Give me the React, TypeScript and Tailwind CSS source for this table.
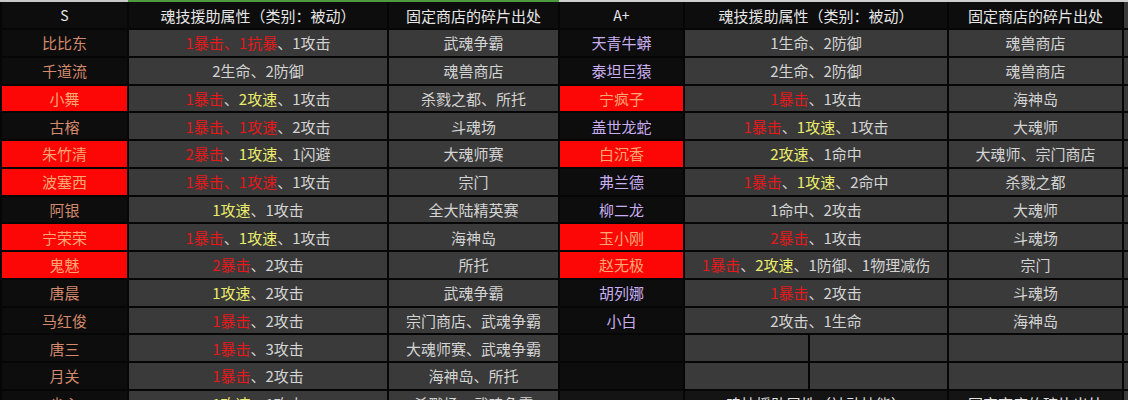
import React from "react";

type Seg = [string, "r" | "y" | "g"];

const colorClass: Record<string, string> = {
  r: "text-[#e3191b]",
  y: "text-[#ecec6c]",
  g: "text-[#d4d4d4]",
};

type Row = {
  name: string;
  red: boolean;
  attrs: Seg[];
  shop: string;
};

const leftRows: Row[] = [
  { name: "比比东", red: false, attrs: [["1暴击、1抗暴", "r"], ["、1攻击", "g"]], shop: "武魂争霸" },
  { name: "千道流", red: false, attrs: [["2生命、2防御", "g"]], shop: "魂兽商店" },
  { name: "小舞", red: true, attrs: [["1暴击", "r"], ["、", "g"], ["2攻速", "y"], ["、1攻击", "g"]], shop: "杀戮之都、所托" },
  { name: "古榕", red: false, attrs: [["1暴击、1攻速", "r"], ["、2攻击", "g"]], shop: "斗魂场" },
  { name: "朱竹清", red: true, attrs: [["2暴击", "r"], ["、", "g"], ["1攻速", "y"], ["、1闪避", "g"]], shop: "大魂师赛" },
  { name: "波塞西", red: true, attrs: [["1暴击、1攻速", "r"], ["、1攻击", "g"]], shop: "宗门" },
  { name: "阿银", red: false, attrs: [["1攻速", "y"], ["、1攻击", "g"]], shop: "全大陆精英赛" },
  { name: "宁荣荣", red: true, attrs: [["1暴击", "r"], ["、", "g"], ["1攻速", "y"], ["、1攻击", "g"]], shop: "海神岛" },
  { name: "鬼魅", red: true, attrs: [["2暴击", "r"], ["、2攻击", "g"]], shop: "所托" },
  { name: "唐晨", red: false, attrs: [["1攻速", "y"], ["、2攻击", "g"]], shop: "武魂争霸" },
  { name: "马红俊", red: false, attrs: [["1暴击", "r"], ["、2攻击", "g"]], shop: "宗门商店、武魂争霸" },
  { name: "唐三", red: false, attrs: [["1暴击", "r"], ["、3攻击", "g"]], shop: "大魂师赛、武魂争霸" },
  { name: "月关", red: false, attrs: [["1暴击", "r"], ["、2攻击", "g"]], shop: "海神岛、所托" },
  { name: "尘心", red: false, attrs: [["1攻速", "y"], ["、1攻击", "g"]], shop: "杀戮场、武魂争霸" },
];

const rightRows: (Row | null)[] = [
  { name: "天青牛蟒", red: false, attrs: [["1生命、2防御", "g"]], shop: "魂兽商店" },
  { name: "泰坦巨猿", red: false, attrs: [["2生命、2防御", "g"]], shop: "魂兽商店" },
  { name: "宁疯子", red: true, attrs: [["1暴击", "r"], ["、1攻击", "g"]], shop: "海神岛" },
  { name: "盖世龙蛇", red: false, attrs: [["1暴击", "r"], ["、", "g"], ["1攻速", "y"], ["、1攻击", "g"]], shop: "大魂师" },
  { name: "白沉香", red: true, attrs: [["2攻速", "y"], ["、1命中", "g"]], shop: "大魂师、宗门商店" },
  { name: "弗兰德", red: false, attrs: [["1暴击", "r"], ["、", "g"], ["1攻速", "y"], ["、2命中", "g"]], shop: "杀戮之都" },
  { name: "柳二龙", red: false, attrs: [["1命中、2攻击", "g"]], shop: "大魂师" },
  { name: "玉小刚", red: true, attrs: [["2暴击", "r"], ["、1攻击", "g"]], shop: "斗魂场" },
  { name: "赵无极", red: true, attrs: [["1暴击", "r"], ["、", "g"], ["2攻速", "y"], ["、1防御、1物理减伤", "g"]], shop: "宗门" },
  { name: "胡列娜", red: false, attrs: [["1暴击", "r"], ["、2攻击", "g"]], shop: "斗魂场" },
  { name: "小白", red: false, attrs: [["2攻击、1生命", "g"]], shop: "海神岛" },
  null,
  null,
];

const font = { fontFamily: '"Noto Sans CJK SC", "Noto Sans", sans-serif' };

function Attr({ segs }: { segs: Seg[] }) {
  return (
    <span className="whitespace-nowrap">
      {segs.map((s, i) => (
        <span key={i} className={colorClass[s[1]]}>
          {s[0]}
        </span>
      ))}
    </span>
  );
}

function NameCell({ row, side }: { row: Row | null; side: "L" | "R" }) {
  if (!row) return <div className="bg-[#0d0d0d]" />;
  const textColor = row.red
    ? "text-[#ffa673]"
    : side === "L"
    ? "text-[#d48a6c]"
    : "text-[#c9aef0]";
  return (
    <div
      className={`flex items-center justify-center ${
        row.red ? "bg-[#fd0606]" : "bg-[#0d0d0d]"
      } ${textColor}`}
    >
      {row.name}
    </div>
  );
}

function GrayCell({ children }: { children?: React.ReactNode }) {
  return (
    <div className="flex items-center justify-center bg-[#3a3a3a] text-[#d4d4d4]">
      {children}
    </div>
  );
}

const gridCols =
  "grid grid-cols-[125px_258px_169px_123px_262px_173px_4px] gap-x-[2px] pl-[2px]";

export default function App() {
  return (
    <div
      className="w-[1128px] h-[400px] overflow-hidden bg-[#060606] text-[15px] leading-none"
      style={font}
    >
      {/* top edge line */}
      <div className="flex h-[2px]">
        <div className="w-[128px] bg-[#c9c9c9]" />
        <div className="w-[431px] bg-[#4e9a3e]" />
        <div className="flex-1 bg-[#cfcfcf]" />
      </div>
      {/* header */}
      <div className={`${gridCols} h-[26px]`}>
        <div className="flex items-center justify-center bg-[#0d0d0d] text-[#e6e6e6] text-[14px]">S</div>
        <div className="flex items-center justify-center bg-[#0d0d0d] text-[#e6e6e6]">魂技援助属性（类别：被动）</div>
        <div className="flex items-center justify-center bg-[#0d0d0d] text-[#e6e6e6]">固定商店的碎片出处</div>
        <div className="flex items-center justify-center bg-[#0d0d0d] text-[#e6e6e6] text-[14px]">A+</div>
        <div className="flex items-center justify-center bg-[#0d0d0d] text-[#e6e6e6]">魂技援助属性（类别：被动）</div>
        <div className="flex items-center justify-center bg-[#0d0d0d] text-[#e6e6e6]">固定商店的碎片出处</div>
        <div className="bg-[#3a3a3a]" />
      </div>
      <div className="flex flex-col gap-y-[2px] pt-[2px]">
        {leftRows.map((lr, i) => {
          const isLast = i === leftRows.length - 1;
          const rr = i < rightRows.length ? rightRows[i] : undefined;
          return (
            <div key={i} className={`${gridCols} h-[25.75px] shrink-0`}>
              <NameCell row={lr} side="L" />
              <GrayCell>
                <Attr segs={lr.attrs} />
              </GrayCell>
              <GrayCell>{lr.shop}</GrayCell>
              {isLast ? (
                <>
                  <div className="bg-[#141414]" />
                  <div className="flex items-center justify-center bg-[#141414] text-[#e6e6e6]">
                    魂技援助属性（被动技能）
                  </div>
                  <div className="flex items-center justify-center bg-[#141414] text-[#e6e6e6]">
                    固定商店的碎片出处
                  </div>
                </>
              ) : rr ? (
                <>
                  <NameCell row={rr} side="R" />
                  <GrayCell>
                    <Attr segs={rr.attrs} />
                  </GrayCell>
                  <GrayCell>{rr.shop}</GrayCell>
                </>
              ) : (
                <>
                  <div className="bg-[#0d0d0d]" />
                  <div className="flex gap-x-[2px]">
                    <div className="w-[123px] bg-[#3a3a3a]" />
                    <div className="flex-1 bg-[#3a3a3a]" />
                  </div>
                  <GrayCell />
                </>
              )}
              <div className="bg-[#3a3a3a]" />
            </div>
          );
        })}
      </div>
    </div>
  );
}
